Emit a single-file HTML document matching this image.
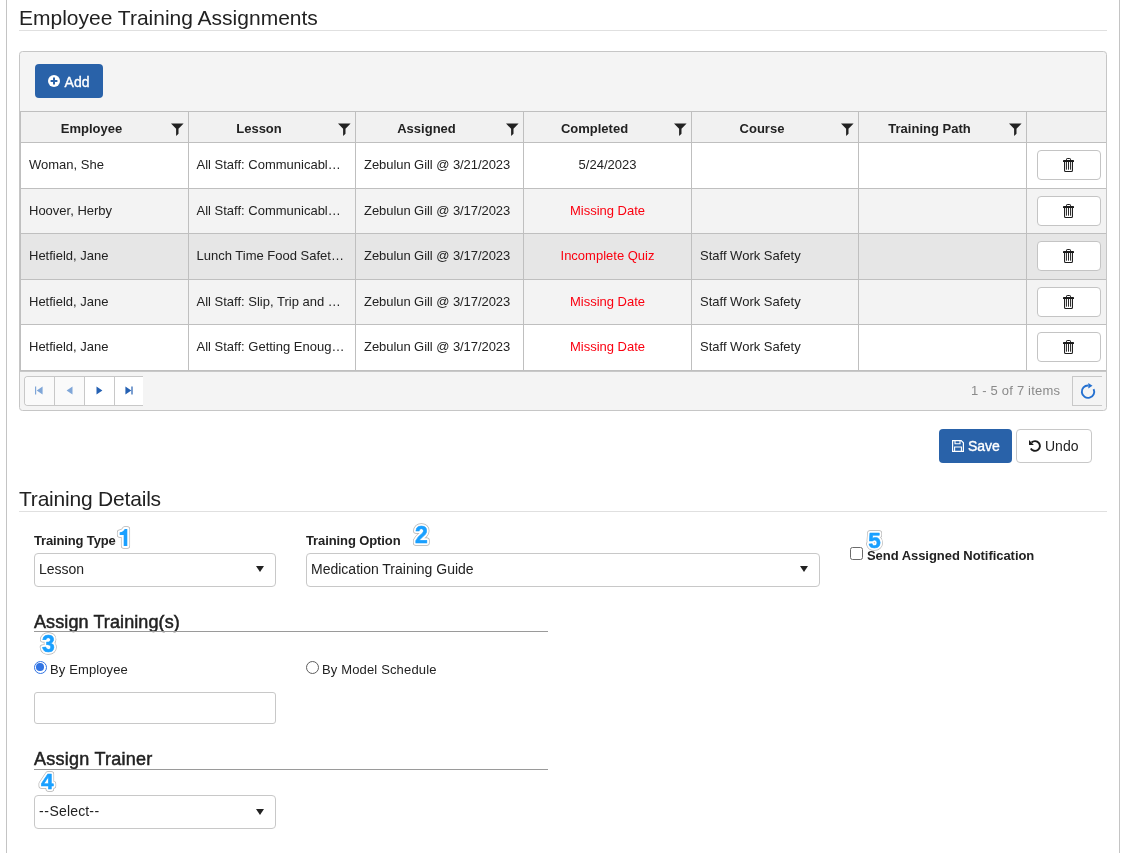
<!DOCTYPE html>
<html>
<head>
<meta charset="utf-8">
<title>Employee Training Assignments</title>
<style>
*{box-sizing:border-box;margin:0;padding:0}
html,body{width:1127px;height:853px;overflow:hidden;background:#fff}
body{font-family:"Liberation Sans",sans-serif;color:#222;font-size:13px;position:relative;will-change:transform}
.a{position:absolute;white-space:nowrap}
.frame{position:absolute;left:6px;top:-10px;width:1114px;height:900px;border:1px solid #c4c4c4}
.h2{position:absolute;left:19px;font-size:21px;line-height:24px;color:#222;white-space:nowrap}
.hr{position:absolute;left:19px;width:1088px;height:1px;background:#e0e0e0}
.panel{position:absolute;left:19px;top:51px;width:1088px;height:360px;border:1px solid #c6c6c6;border-radius:3.5px;background:#f4f4f4}
.btn{position:absolute;border-radius:4px;font-size:14px;white-space:nowrap}
.bp{background:#2962a9;color:#fff;-webkit-text-stroke:0.35px #fff}
.bd{background:#fff;color:#222;border:1px solid #c8c8c8}
/* grid pieces */
.hd{position:absolute;left:20px;top:111px;width:1086px;height:32px;background:#f1f1f1;border-top:1px solid #bfbfbf;border-bottom:1px solid #bfbfbf}
.row{position:absolute;left:20px;width:1086px;background:#fff;border-bottom:1px solid #bfbfbf}
.row.alt{background:#f3f3f3}
.row.sel{background:#e6e6e6}
.vl{position:absolute;top:111px;width:1px;height:260px;background:#bfbfbf}
.th{position:absolute;top:113px;height:30px;line-height:31px;font-weight:bold;font-size:13px;text-align:center;color:#222}
.td{position:absolute;font-size:13px;line-height:44px;height:44px;color:#222;white-space:nowrap}
.red{color:#fb0010}
.flt{position:absolute;top:122.5px;width:13px;height:13px}
.tb{position:absolute;left:1037px;width:64px;height:30px;border:1px solid #c4c4c4;border-radius:4px;background:#fff}
.tb svg{position:absolute;left:25px;top:7px}
.lb{position:absolute;font-weight:bold;font-size:13px;line-height:16px;white-space:nowrap;color:#222}
.sl{position:absolute;height:34px;border:1px solid #c8c8c8;border-radius:4px;background:#fff;font-size:14px;line-height:30px;padding-left:4px;color:#222;white-space:nowrap}
.sl:after{content:"";position:absolute;right:11px;top:12px;border-left:4px solid transparent;border-right:4px solid transparent;border-top:6px solid #222}
.sl.lo:after{top:13px}
.h4{position:absolute;left:34px;letter-spacing:0.1px;font-size:18px;line-height:20px;white-space:nowrap;color:#222;-webkit-text-stroke:0.5px #222}
.hr2{position:absolute;left:34px;width:514px;height:1px;background:#9a9a9a}
.rd{position:absolute;width:13px;height:13px;border-radius:50%;border:1px solid #5e5e5e;background:#fff}
.rd.on{border:1.3px solid #3275e4}
.rd.on:after{content:"";position:absolute;left:1.4px;top:1.4px;width:7.6px;height:7.6px;border-radius:50%;background:#3275e4}
.tx{position:absolute;letter-spacing:0.2px;font-size:13px;line-height:16px;white-space:nowrap;color:#222}
</style>
</head>
<body>
<div class="frame"></div>

<div class="h2" style="top:6px">Employee Training Assignments</div>
<div class="hr" style="top:30px"></div>

<div class="panel"></div>
<div class="btn bp" style="left:35px;top:64px;width:68px;height:34px">
  <svg class="a" style="left:13px;top:11px" width="12" height="12" viewBox="0 0 12 12"><circle cx="6" cy="6" r="6" fill="#fff"/><path d="M5 2.6h2V5h2.4v2H7v2.4H5V7H2.6V5H5z" fill="#2962a9"/></svg>
  <span class="a" style="left:29.6px;top:9.5px;line-height:16px">Add</span>
</div>
<div class="hd"></div>
<div class="row " style="top:143px;height:46px"></div>
<div class="row alt" style="top:189px;height:45px"></div>
<div class="row sel" style="top:234px;height:46px"></div>
<div class="row alt" style="top:280px;height:45px"></div>
<div class="row " style="top:325px;height:46px"></div>
<div class="a" style="left:20px;top:371px;width:1086px;height:1px;background:#c8c8c8"></div>
<div class="vl" style="left:20px"></div>
<div class="vl" style="left:188px"></div>
<div class="vl" style="left:355px"></div>
<div class="vl" style="left:523px"></div>
<div class="vl" style="left:691px"></div>
<div class="vl" style="left:858px"></div>
<div class="vl" style="left:1026px"></div>
<div class="th" style="left:21px;width:141px">Employee</div>
<svg class="flt" style="left:171px" viewBox="0 0 13 13"><path d="M0 0.4H12.6L7.5 5.8V10.8L5.1 13V5.8z" fill="#222"/></svg>
<div class="th" style="left:189px;width:140px">Lesson</div>
<svg class="flt" style="left:338px" viewBox="0 0 13 13"><path d="M0 0.4H12.6L7.5 5.8V10.8L5.1 13V5.8z" fill="#222"/></svg>
<div class="th" style="left:356px;width:141px">Assigned</div>
<svg class="flt" style="left:506px" viewBox="0 0 13 13"><path d="M0 0.4H12.6L7.5 5.8V10.8L5.1 13V5.8z" fill="#222"/></svg>
<div class="th" style="left:524px;width:141px">Completed</div>
<svg class="flt" style="left:674px" viewBox="0 0 13 13"><path d="M0 0.4H12.6L7.5 5.8V10.8L5.1 13V5.8z" fill="#222"/></svg>
<div class="th" style="left:692px;width:140px">Course</div>
<svg class="flt" style="left:841px" viewBox="0 0 13 13"><path d="M0 0.4H12.6L7.5 5.8V10.8L5.1 13V5.8z" fill="#222"/></svg>
<div class="th" style="left:859px;width:141px">Training Path</div>
<svg class="flt" style="left:1009px" viewBox="0 0 13 13"><path d="M0 0.4H12.6L7.5 5.8V10.8L5.1 13V5.8z" fill="#222"/></svg>
<div class="td" style="left:29px;top:143px">Woman, She</div>
<div class="td" style="left:196.5px;top:143px">All Staff: Communicabl…</div>
<div class="td" style="left:364px;top:143px;letter-spacing:-0.06px">Zebulun Gill @ 3/21/2023</div>
<div class="td " style="left:524px;top:143px;width:167px;text-align:center">5/24/2023</div>
<div class="tb" style="top:150px"><svg width="11" height="15" viewBox="0 0 11 15"><path d="M3.5 2.4V1.2q0-.7.7-.7h2.6q.7 0 .7.7V2.4" fill="none" stroke="#1c1c1c" stroke-width="1"/><rect x="0" y="2.1" width="11" height="1.9" rx=".3" fill="#1c1c1c"/><path d="M1.55 3.9V12.5q0 1 1 1h5.9q1 0 1-1V3.9" fill="none" stroke="#1c1c1c" stroke-width="1.05"/><path d="M3.45 4v7.3M5.5 4v7.3M7.55 4v7.3" fill="none" stroke="#1c1c1c" stroke-width=".95" stroke-linecap="round"/></svg></div>
<div class="td" style="left:29px;top:189px">Hoover, Herby</div>
<div class="td" style="left:196.5px;top:189px">All Staff: Communicabl…</div>
<div class="td" style="left:364px;top:189px;letter-spacing:-0.06px">Zebulun Gill @ 3/17/2023</div>
<div class="td red" style="left:524px;top:189px;width:167px;text-align:center">Missing Date</div>
<div class="tb" style="top:196px"><svg width="11" height="15" viewBox="0 0 11 15"><path d="M3.5 2.4V1.2q0-.7.7-.7h2.6q.7 0 .7.7V2.4" fill="none" stroke="#1c1c1c" stroke-width="1"/><rect x="0" y="2.1" width="11" height="1.9" rx=".3" fill="#1c1c1c"/><path d="M1.55 3.9V12.5q0 1 1 1h5.9q1 0 1-1V3.9" fill="none" stroke="#1c1c1c" stroke-width="1.05"/><path d="M3.45 4v7.3M5.5 4v7.3M7.55 4v7.3" fill="none" stroke="#1c1c1c" stroke-width=".95" stroke-linecap="round"/></svg></div>
<div class="td" style="left:29px;top:234px">Hetfield, Jane</div>
<div class="td" style="left:196.5px;top:234px">Lunch Time Food Safet…</div>
<div class="td" style="left:364px;top:234px;letter-spacing:-0.06px">Zebulun Gill @ 3/17/2023</div>
<div class="td red" style="left:524px;top:234px;width:167px;text-align:center">Incomplete Quiz</div>
<div class="td" style="left:700px;top:234px">Staff Work Safety</div>
<div class="tb" style="top:241px"><svg width="11" height="15" viewBox="0 0 11 15"><path d="M3.5 2.4V1.2q0-.7.7-.7h2.6q.7 0 .7.7V2.4" fill="none" stroke="#1c1c1c" stroke-width="1"/><rect x="0" y="2.1" width="11" height="1.9" rx=".3" fill="#1c1c1c"/><path d="M1.55 3.9V12.5q0 1 1 1h5.9q1 0 1-1V3.9" fill="none" stroke="#1c1c1c" stroke-width="1.05"/><path d="M3.45 4v7.3M5.5 4v7.3M7.55 4v7.3" fill="none" stroke="#1c1c1c" stroke-width=".95" stroke-linecap="round"/></svg></div>
<div class="td" style="left:29px;top:280px">Hetfield, Jane</div>
<div class="td" style="left:196.5px;top:280px">All Staff: Slip, Trip and …</div>
<div class="td" style="left:364px;top:280px;letter-spacing:-0.06px">Zebulun Gill @ 3/17/2023</div>
<div class="td red" style="left:524px;top:280px;width:167px;text-align:center">Missing Date</div>
<div class="td" style="left:700px;top:280px">Staff Work Safety</div>
<div class="tb" style="top:287px"><svg width="11" height="15" viewBox="0 0 11 15"><path d="M3.5 2.4V1.2q0-.7.7-.7h2.6q.7 0 .7.7V2.4" fill="none" stroke="#1c1c1c" stroke-width="1"/><rect x="0" y="2.1" width="11" height="1.9" rx=".3" fill="#1c1c1c"/><path d="M1.55 3.9V12.5q0 1 1 1h5.9q1 0 1-1V3.9" fill="none" stroke="#1c1c1c" stroke-width="1.05"/><path d="M3.45 4v7.3M5.5 4v7.3M7.55 4v7.3" fill="none" stroke="#1c1c1c" stroke-width=".95" stroke-linecap="round"/></svg></div>
<div class="td" style="left:29px;top:325px">Hetfield, Jane</div>
<div class="td" style="left:196.5px;top:325px">All Staff: Getting Enoug…</div>
<div class="td" style="left:364px;top:325px;letter-spacing:-0.06px">Zebulun Gill @ 3/17/2023</div>
<div class="td red" style="left:524px;top:325px;width:167px;text-align:center">Missing Date</div>
<div class="td" style="left:700px;top:325px">Staff Work Safety</div>
<div class="tb" style="top:332px"><svg width="11" height="15" viewBox="0 0 11 15"><path d="M3.5 2.4V1.2q0-.7.7-.7h2.6q.7 0 .7.7V2.4" fill="none" stroke="#1c1c1c" stroke-width="1"/><rect x="0" y="2.1" width="11" height="1.9" rx=".3" fill="#1c1c1c"/><path d="M1.55 3.9V12.5q0 1 1 1h5.9q1 0 1-1V3.9" fill="none" stroke="#1c1c1c" stroke-width="1.05"/><path d="M3.45 4v7.3M5.5 4v7.3M7.55 4v7.3" fill="none" stroke="#1c1c1c" stroke-width=".95" stroke-linecap="round"/></svg></div>
<!-- pager -->
<div class="a" style="left:24px;top:376px;width:119px;height:30px;background:#fff;border:1px solid #c8c8c8;border-right:0;border-radius:4px 0 0 4px;overflow:hidden">
  <div class="a" style="left:0;top:0;width:60px;height:28px;background:#fafafa"></div>
  <div class="a" style="left:29px;top:0;width:1px;height:28px;background:#c8c8c8"></div>
  <div class="a" style="left:59px;top:0;width:1px;height:28px;background:#c8c8c8"></div>
  <div class="a" style="left:89px;top:0;width:1px;height:28px;background:#c8c8c8"></div>
  <svg class="a" style="left:9.6px;top:9.4px" width="9" height="9" viewBox="0 0 9 9"><path d="M0 0.4h1.2v8.2H0z M7.6 0.6v7.8L1.7 4.5z" fill="#7fa6d8"/></svg>
  <svg class="a" style="left:41px;top:9.4px" width="7" height="9" viewBox="0 0 7 9"><path d="M6.5 0.6v7.8L0.6 4.5z" fill="#7fa6d8"/></svg>
  <svg class="a" style="left:71px;top:9.4px" width="7" height="9" viewBox="0 0 7 9"><path d="M0.5 0.6v7.8L6.4 4.5z" fill="#2561b3"/></svg>
  <svg class="a" style="left:99.5px;top:9.4px" width="9" height="9" viewBox="0 0 9 9"><path d="M6.4 0.4h1.2v8.2H6.4z M0.4 0.6v7.8L6.3 4.5z" fill="#2561b3"/></svg>
</div>
<div class="a" style="left:971px;top:383px;font-size:13px;line-height:16px;color:#8a8a8a;letter-spacing:0.2px">1 - 5 of 7 items</div>
<div class="a" style="left:1072px;top:376px;width:30px;height:30px;border:1px solid #c8c8c8;border-right:0;background:#f4f4f4">
  <svg class="a" style="left:7px;top:6px" width="16" height="17" viewBox="0 0 16 17"><path d="M13.62 6.08A6.2 6.2 0 1 1 8.3 2.5" fill="none" stroke="#2470d0" stroke-width="1.9"/><path d="M8.3 0L12.5 2.7L8.3 5.5z" fill="#2470d0"/></svg>
</div>

<!-- save / undo -->
<div class="btn bp" style="left:939px;top:429px;width:73px;height:34px">
  <svg class="a" style="left:13px;top:11px" width="12" height="12" viewBox="0 0 12 12"><path d="M0.6 0.6h8.6l2.2 2.2v8.6H0.6z" fill="none" stroke="#fff" stroke-width="1.2"/><path d="M3 0.6v3.2h5V0.6 M2.6 11.4V7h6.8v4.4" fill="none" stroke="#fff" stroke-width="1.1"/></svg>
  <span class="a" style="left:29px;top:9px;line-height:16px">Save</span>
</div>
<div class="btn bd" style="left:1016px;top:429px;width:76px;height:34px">
  <svg class="a" style="left:12px;top:10px" width="12" height="12" viewBox="0 0 12 12"><path d="M2.53 2.53A4.9 4.9 0 1 1 1.76 8.45" fill="none" stroke="#1c1c1c" stroke-width="1.9"/><path d="M0 0.1V5H4.9z" fill="#1c1c1c"/></svg>
  <span class="a" style="left:28px;top:8px;line-height:16px">Undo</span>
</div>

<div class="h2" style="top:487px;letter-spacing:-0.2px">Training Details</div>
<div class="hr" style="top:511px"></div>
<div class="lb" style="left:34px;top:533px;letter-spacing:-0.15px">Training Type</div>
<div class="sl" style="left:34px;top:553px;width:242px">Lesson</div>

<div class="lb" style="left:306px;top:533px;letter-spacing:-0.1px">Training Option</div>
<div class="sl" style="left:306px;top:553px;width:514px">Medication Training Guide</div>

<div class="a" style="left:850px;top:547px;width:13px;height:13px;border:1px solid #6b6b6b;border-radius:2.5px;background:#fff"></div>
<div class="lb" style="left:867px;top:548px;letter-spacing:-0.05px">Send Assigned Notification</div>

<div class="h4" style="top:612px">Assign Training(s)</div>
<div class="hr2" style="top:631px"></div>
<div class="rd on" style="left:34px;top:661px"></div>
<div class="tx" style="left:50px;top:662px;letter-spacing:0.12px">By Employee</div>
<div class="rd" style="left:306px;top:661px"></div>
<div class="tx" style="left:322px;top:662px;letter-spacing:0.15px">By Model Schedule</div>
<div class="a" style="left:34px;top:692px;width:242px;height:32px;border:1px solid #c8c8c8;border-radius:3px;background:#fff"></div>

<div class="h4" style="top:749px;letter-spacing:.25px">Assign Trainer</div>
<div class="hr2" style="top:769px"></div>
<div class="sl lo" style="left:34px;top:795px;width:242px"><span style="letter-spacing:.6px">--</span><span style="letter-spacing:.15px">Select</span><span style="letter-spacing:.6px">--</span></div>
<svg class="a" style="left:0;top:0;overflow:visible" width="1" height="1"><g stroke-linejoin="round"><path d="M127.3 529.1V546H123.7V534.9H119.7V532.3Q123.5 532.2 124.7 529.1Z" fill="none" stroke="#b2b2b2" stroke-width="5.5"/><path d="M127.3 529.1V546H123.7V534.9H119.7V532.3Q123.5 532.2 124.7 529.1Z" fill="none" stroke="#fff" stroke-width="4.2"/><path d="M127.3 529.1V546H123.7V534.9H119.7V532.3Q123.5 532.2 124.7 529.1Z" fill="#1aa0ff"/></g></svg>
<svg class="a" style="left:0;top:0;overflow:visible" width="1" height="1"><g font-family="Liberation Sans" font-weight="bold" font-size="23" stroke-linejoin="round"><text x="415" y="543" fill="none" stroke="#b2b2b2" stroke-width="5.5">2</text><text x="415" y="543" fill="none" stroke="#fff" stroke-width="4.2">2</text><text x="415" y="543" fill="#1aa0ff" stroke="#1aa0ff" stroke-width=".55">2</text></g></svg>
<svg class="a" style="left:0;top:0;overflow:visible" width="1" height="1"><g font-family="Liberation Sans" font-weight="bold" font-size="23" stroke-linejoin="round"><text x="868.2" y="548.2" font-size="22.5" fill="none" stroke="#b2b2b2" stroke-width="5.5">5</text><text x="868.2" y="548.2" font-size="22.5" fill="none" stroke="#fff" stroke-width="4.2">5</text><text x="868.2" y="548.2" font-size="22.5" fill="#1aa0ff" stroke="#1aa0ff" stroke-width=".55">5</text></g></svg>
<svg class="a" style="left:0;top:0;overflow:visible" width="1" height="1"><g font-family="Liberation Sans" font-weight="bold" font-size="23" stroke-linejoin="round"><text x="42" y="652" fill="none" stroke="#b2b2b2" stroke-width="5.5">3</text><text x="42" y="652" fill="none" stroke="#fff" stroke-width="4.2">3</text><text x="42" y="652" fill="#1aa0ff" stroke="#1aa0ff" stroke-width=".55">3</text></g></svg>
<svg class="a" style="left:0;top:0;overflow:visible" width="1" height="1"><g font-family="Liberation Sans" font-weight="bold" font-size="23" stroke-linejoin="round"><text x="41.1" y="789" font-size="22.5" fill="none" stroke="#b2b2b2" stroke-width="5.5">4</text><text x="41.1" y="789" font-size="22.5" fill="none" stroke="#fff" stroke-width="4.2">4</text><text x="41.1" y="789" font-size="22.5" fill="#1aa0ff" stroke="#1aa0ff" stroke-width=".55">4</text></g></svg>

</body>
</html>
